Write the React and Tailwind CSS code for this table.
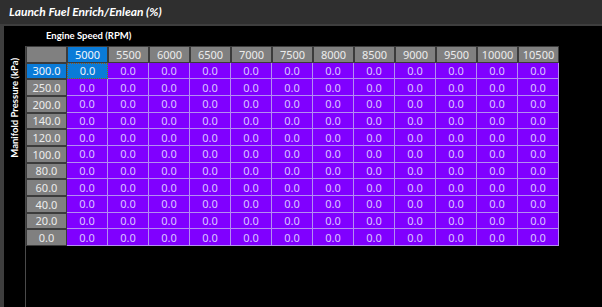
import React from 'react';

const rpm = ['5000', '5500', '6000', '6500', '7000', '7500', '8000', '8500', '9000', '9500', '10000', '10500'];
const kpa = ['300.0', '250.0', '200.0', '140.0', '120.0', '100.0', '80.0', '60.0', '40.0', '20.0', '0.0'];

const HeaderCell = ({ label, active }) => (
  <div
    className={`flex items-center justify-center border border-[#3b3b3b] text-[11px] leading-none ${
      active ? 'bg-[#0a7bd8] text-[#f2f6fb]' : 'bg-[#808080] text-[#ececec]'
    }`}
  >
    {label}
  </div>
);

const DataCell = ({ selected }) => (
  <div
    className={`flex items-center justify-center text-[11px] leading-none ${
      selected
        ? 'bg-[#0a7bd8] text-[#eef4fb] border border-dotted border-[#8a5b24]'
        : 'bg-[#8000ff] text-[#dcc6ff] border-r border-b border-[#b48cf2]'
    }`}
  >
    0.0
  </div>
);

export default function App() {
  return (
    <div className="w-[602px] h-[307px] bg-black overflow-hidden flex flex-col font-['Noto_Sans',sans-serif]">
      <div className="h-[24px] shrink-0 bg-[#2f2f2f] flex items-center pl-[9px]">
        <span className="text-white text-[12px] font-bold italic font-['Lato',sans-serif]">Launch Fuel Enrich/Enlean (%)</span>
      </div>
      <div className="flex-1 flex flex-col border-t-2 border-l-4 border-[#3e3e3e] bg-black">
        <div className="h-[20px] shrink-0 flex items-center pl-[42px]">
          <span className="text-white text-[9.5px] font-bold font-['Lato',sans-serif]">Engine Speed (RPM)</span>
        </div>
        <div className="flex-1 flex">
          <div className="w-[21px] shrink-0 flex justify-center pt-[12px]">
            <span className="[writing-mode:vertical-rl] rotate-180 text-white text-[9.5px] font-bold leading-none h-fit font-['Lato',sans-serif]">
              Manifold Pressure (kPa)
            </span>
          </div>
          <div className="flex-1 border-l border-[#4a4a4a]">
            <div className="grid grid-cols-[41px_repeat(12,41px)] grid-rows-[repeat(12,16.67px)] w-fit">
              <HeaderCell label="" />
              {rpm.map((r, i) => (
                <HeaderCell key={r} label={r} active={i === 0} />
              ))}
              {kpa.map((k, ri) => (
                <React.Fragment key={k}>
                  <HeaderCell label={k} active={ri === 0} />
                  {rpm.map((r, ci) => (
                    <DataCell key={r} selected={ri === 0 && ci === 0} />
                  ))}
                </React.Fragment>
              ))}
            </div>
          </div>
        </div>
      </div>
    </div>
  );
}
